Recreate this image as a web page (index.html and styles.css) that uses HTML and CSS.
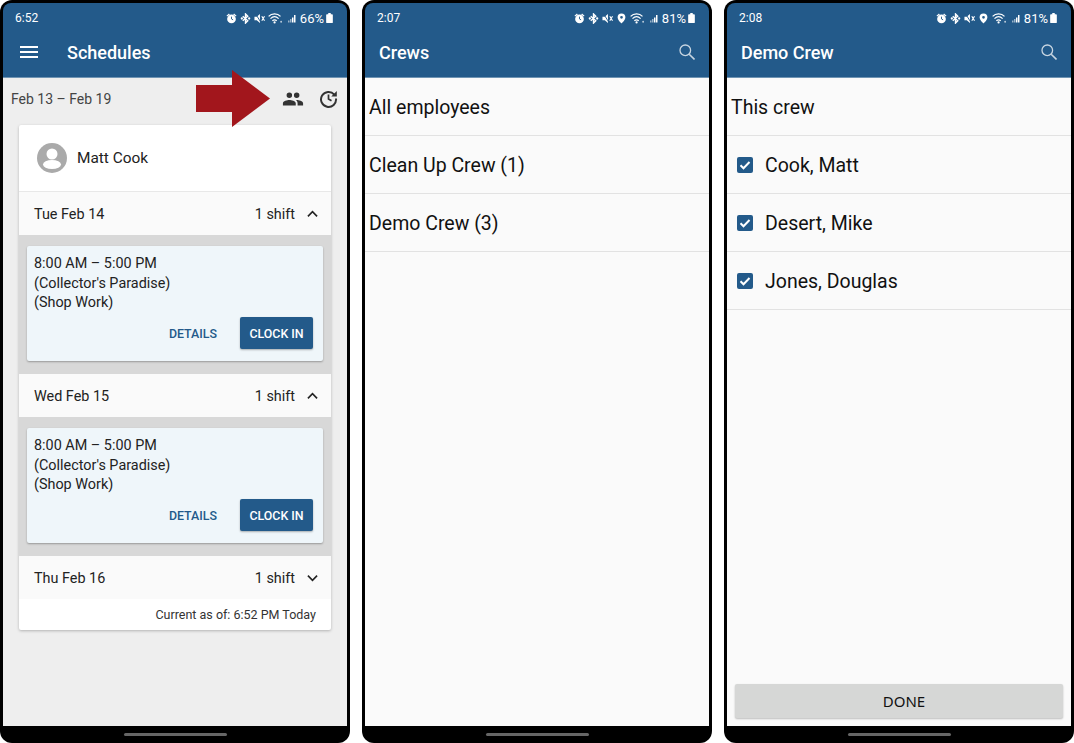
FILE: index.html
```html
<!DOCTYPE html>
<html lang="en">
<head>
  <meta charset="UTF-8" />
  <meta name="viewport" content="width=device-width, initial-scale=1.0"/>
  <title>Schedules and Crews</title>
  <link rel="stylesheet" href="styles.css">
</head>
<body>

<svg class="sprites" aria-hidden="true">
  <symbol id="i-alarm" viewBox="0 0 24 24"><path fill="currentColor" d="M23 6 17.500 1.300 15.800 3.300l5.500 4.600zM8.200 3.300 6.500 1.300 1 6l1.700 1.900zM12 3.500a9.500 9.500 0 1 0 0 19 9.500 9.500 0 0 0 0-19z"/><path fill="none" stroke="#235a8a" stroke-width="2" d="M12 8v5l3.500 2"/></symbol>
  <symbol id="i-bt" viewBox="0 0 24 24"><path fill="none" stroke="currentColor" stroke-width="3" d="M6 7l11 10-5 5V2l5 5L6 17"/><circle cx="4" cy="12" r="2.500" fill="currentColor"/><circle cx="20" cy="12" r="2.500" fill="currentColor"/></symbol>
  <symbol id="i-mute" viewBox="0 0 24 24"><path fill="currentColor" d="M1 8v8h5l7 6V2L6 8z"/><path fill="none" stroke="#235a8a" stroke-width="2" d="M3 1l13 21"/><path fill="none" stroke="currentColor" stroke-width="2.500" d="M17 7l6 10M23 7l-6 10"/></symbol>
  <symbol id="i-pin" viewBox="0 0 24 24"><path fill="currentColor" fill-rule="evenodd" d="M12 1a8.500 8.500 0 0 0-8.500 8.500C3.500 15.500 12 23 12 23s8.500-7.500 8.500-13.500A8.500 8.500 0 0 0 12 1zm0 5.500a3 3 0 1 1 0 6 3 3 0 0 1 0-6z"/></symbol>
  <symbol id="i-wifi" viewBox="0 0 24 18"><path fill="none" stroke="currentColor" stroke-width="2" d="M1 6.500C6 1 15 1 20 6.500M4 10c4-3.800 9-3.800 13 0M7 13.500c2-1.800 5-1.800 7 0"/><circle cx="10.500" cy="16" r="1.800" fill="currentColor"/><circle cx="21" cy="15" r="1.500" fill="currentColor" opacity=".7"/></symbol>
  <symbol id="i-signal" viewBox="0 0 20 20"><path fill="currentColor" opacity=".55" d="M2 14h3v4H2zM6 11h3v7H6z"/><path fill="currentColor" d="M10 8h3v10h-3zM14 3h3v15h-3z"/></symbol>
  <symbol id="i-battery" viewBox="0 0 8 12"><path fill="currentColor" d="M2.500 0h3v1.500H7a1 1 0 0 1 1 1V11a1 1 0 0 1-1 1H1a1 1 0 0 1-1-1V2.500a1 1 0 0 1 1-1h1.500z"/></symbol>
  <symbol id="i-search" viewBox="0 0 16 16"><circle cx="6.300" cy="6.300" r="5.300" fill="none" stroke="currentColor" stroke-width="1.300"/><path fill="none" stroke="currentColor" stroke-width="1.600" d="M10.200 10.200 15.500 15.500"/></symbol>
  <symbol id="i-check" viewBox="0 0 16 16"><rect width="16" height="16" rx="2" fill="#235a8a"/><path fill="none" stroke="#fff" stroke-width="2" d="M3.500 8.200l3 3 6-6.200"/></symbol>
</svg>

<div class="phone">
  <div class="screen">
    <header class="appbar">
      <div class="status">
        <span>6:52</span>
        <div class="status-icons">
          <svg class="si"><use href="#i-alarm"/></svg>
          <svg class="si"><use href="#i-bt"/></svg>
          <svg class="si"><use href="#i-mute"/></svg>
          <svg class="si-wifi"><use href="#i-wifi"/></svg>
          <svg class="si-signal"><use href="#i-signal"/></svg>
          <span class="pct">66%</span>
          <svg class="si-batt"><use href="#i-battery"/></svg>
        </div>
      </div>
      <div class="toolbar">
        <svg class="menu-icon" viewBox="0 0 18 12"><path fill="currentColor" d="M0 0h18v2H0zM0 5h18v2H0zM0 10h18v2H0z"/></svg>
        <div class="title title-menu">Schedules</div>
      </div>
    </header>

    <main class="schedule">
      <div class="date-bar">
        <span class="date-range">Feb 13 – Feb 19</span>
        <div class="date-actions">
          <svg class="group-icon" viewBox="0 0 24 24"><path fill="currentColor" d="M16 11a3 3 0 1 0 0-6 3 3 0 0 0 0 6zm-8 0a3 3 0 1 0 0-6 3 3 0 0 0 0 6zm0 2c-2.300 0-7 1.200-7 3.500V19h14v-2.500C15 14.200 10.300 13 8 13zm8 0h-1c1.200.8 2 2 2 3.500V19h6v-2.500c0-2.300-4.700-3.500-7-3.500z"/></svg>
          <svg class="history-icon" viewBox="0 0 24 24"><path fill="none" stroke="currentColor" stroke-width="2.500" d="M19.300 7A9.500 9.500 0 1 0 21.500 12"/><path fill="currentColor" d="M22.500 2.500V9.500h-7z"/><path fill="none" stroke="currentColor" stroke-width="2.200" d="M12 7v5.500l3.800 2.200"/></svg>
        </div>
      </div>

      <section class="card">
        <div class="person">
          <svg class="avatar" viewBox="0 0 30 30"><circle cx="15" cy="15" r="15" fill="#aaa"/><circle cx="15" cy="11" r="5.500" fill="#fff"/><ellipse cx="15" cy="21.500" rx="9" ry="4.500" fill="#fff"/></svg>
          <span>Matt Cook</span>
        </div>

        <div class="day">
          <span>Tue Feb 14</span>
          <span class="day-count">1 shift</span>
          <svg class="chev" viewBox="0 0 12 8"><path fill="none" stroke="currentColor" stroke-width="1.800" d="M1 6.500l5-5 5 5"/></svg>
        </div>
        <div class="shifts">
          <div class="shift">
            <div>8:00 AM – 5:00 PM</div>
            <div>(Collector's Paradise)</div>
            <div>(Shop Work)</div>
            <div class="shift-actions">
              <span class="details">DETAILS</span>
              <span class="clock-in">CLOCK IN</span>
            </div>
          </div>
        </div>

        <div class="day">
          <span>Wed Feb 15</span>
          <span class="day-count">1 shift</span>
          <svg class="chev" viewBox="0 0 12 8"><path fill="none" stroke="currentColor" stroke-width="1.800" d="M1 6.500l5-5 5 5"/></svg>
        </div>
        <div class="shifts">
          <div class="shift">
            <div>8:00 AM – 5:00 PM</div>
            <div>(Collector's Paradise)</div>
            <div>(Shop Work)</div>
            <div class="shift-actions">
              <span class="details">DETAILS</span>
              <span class="clock-in">CLOCK IN</span>
            </div>
          </div>
        </div>

        <div class="day">
          <span>Thu Feb 16</span>
          <span class="day-count">1 shift</span>
          <svg class="chev" viewBox="0 0 12 8"><path fill="none" stroke="currentColor" stroke-width="1.800" d="M1 1.500l5 5 5-5"/></svg>
        </div>
        <div class="current">Current as of: 6:52 PM Today</div>
      </section>
    </main>
  </div>
  <div class="home-bar"><span></span></div>
  <svg class="arrow" viewBox="0 0 74 57"><path fill="#a2161c" d="M0 15h36V0l38 28.500L36 57V42H0z"/></svg>
</div>

<div class="phone">
  <div class="screen">
    <header class="appbar">
      <div class="status">
        <span>2:07</span>
        <div class="status-icons">
          <svg class="si"><use href="#i-alarm"/></svg>
          <svg class="si"><use href="#i-bt"/></svg>
          <svg class="si"><use href="#i-mute"/></svg>
          <svg class="si"><use href="#i-pin"/></svg>
          <svg class="si-wifi"><use href="#i-wifi"/></svg>
          <svg class="si-signal"><use href="#i-signal"/></svg>
          <span class="pct">81%</span>
          <svg class="si-batt"><use href="#i-battery"/></svg>
        </div>
      </div>
      <div class="toolbar">
        <div class="title">Crews</div>
        <svg class="search-icon"><use href="#i-search"/></svg>
      </div>
    </header>
    <main class="list">
      <div class="row">All employees</div>
      <div class="row">Clean Up Crew (1)</div>
      <div class="row">Demo Crew (3)</div>
    </main>
  </div>
  <div class="home-bar"><span></span></div>
</div>

<div class="phone">
  <div class="screen">
    <header class="appbar">
      <div class="status">
        <span>2:08</span>
        <div class="status-icons">
          <svg class="si"><use href="#i-alarm"/></svg>
          <svg class="si"><use href="#i-bt"/></svg>
          <svg class="si"><use href="#i-mute"/></svg>
          <svg class="si"><use href="#i-pin"/></svg>
          <svg class="si-wifi"><use href="#i-wifi"/></svg>
          <svg class="si-signal"><use href="#i-signal"/></svg>
          <span class="pct">81%</span>
          <svg class="si-batt"><use href="#i-battery"/></svg>
        </div>
      </div>
      <div class="toolbar">
        <div class="title">Demo Crew</div>
        <svg class="search-icon"><use href="#i-search"/></svg>
      </div>
    </header>
    <main class="list">
      <div class="row">This crew</div>
      <div class="row row-check"><svg class="check"><use href="#i-check"/></svg>Cook, Matt</div>
      <div class="row row-check"><svg class="check"><use href="#i-check"/></svg>Desert, Mike</div>
      <div class="row row-check"><svg class="check"><use href="#i-check"/></svg>Jones, Douglas</div>
      <button class="done">DONE</button>
    </main>
  </div>
  <div class="home-bar"><span></span></div>
</div>

</body>
</html>
```

FILE: styles.css
```css
html, body {
  height: 100%;
}
body {
  margin: 0;
  background: white;
  font-family: Roboto, sans-serif;
  color: #222;
  display: flex;
  gap: 12px;
  overflow: hidden;
}
.sprites {
  display: none;
}
.phone {
  position: relative;
  width: 350px;
  height: 743px;
  box-sizing: border-box;
  padding: 3px 3px 0;
  background: black;
  border-radius: 12px;
  display: flex;
  flex-direction: column;
}
.screen {
  height: 723px;
  border-radius: 8px 8px 0 0;
  overflow: hidden;
  display: flex;
  flex-direction: column;
}
.home-bar {
  flex: 1;
  display: flex;
  align-items: center;
  justify-content: center;
}
.home-bar span {
  width: 103px;
  height: 3px;
  border-radius: 2px;
  background: #666;
}

.appbar {
  background: #235a8a;
  color: white;
  height: 74px;
  flex: none;
  border-bottom: 1px solid #6f94b3;
}
.status {
  height: 30px;
  padding: 0 14px 0 12px;
  display: flex;
  align-items: center;
  justify-content: space-between;
  font-size: 12px;
}
.status-icons {
  display: flex;
  align-items: center;
  gap: 3px;
}
.si {
  width: 11px;
  height: 11px;
}
.si-wifi {
  width: 15px;
  height: 12px;
}
.si-signal {
  width: 10px;
  height: 11px;
  margin-left: 1px;
}
.si-batt {
  width: 7px;
  height: 10px;
  margin-left: -1px;
}
.pct {
  font-size: 13px;
}
.toolbar {
  height: 44px;
  box-sizing: border-box;
  padding: 0 14px 6px;
  display: flex;
  align-items: center;
  justify-content: space-between;
}
.menu-icon {
  width: 18px;
  height: 12px;
  margin-left: 3px;
}
.title {
  font-size: 18px;
  font-weight: 500;
}
.title-menu {
  flex: 1;
  margin-left: 29px;
}
.search-icon {
  width: 16px;
  height: 16px;
  margin-bottom: 1px;
  opacity: .75;
}

.schedule {
  flex: 1;
  background: #eee;
}
.date-bar {
  height: 47px;
  box-sizing: border-box;
  padding: 0 9px 5px 8px;
  display: flex;
  align-items: center;
  justify-content: space-between;
}
.date-range {
  font-size: 14px;
  color: #444;
}
.date-actions {
  display: flex;
  align-items: center;
  gap: 15px;
}
.group-icon {
  width: 22px;
  height: 22px;
  color: #333;
}
.history-icon {
  width: 19px;
  height: 19px;
  margin-bottom: 2px;
  color: #333;
}
.arrow {
  position: absolute;
  left: 196px;
  top: 70px;
  width: 74px;
  height: 57px;
}

.card {
  margin: 0 16px;
  background: white;
  border-radius: 2px;
  box-shadow: 0 1px 3px rgba(0,0,0,0.25);
}
.person {
  height: 66px;
  padding: 0 18px;
  display: flex;
  align-items: center;
  gap: 10px;
  font-size: 15.4px;
  border-bottom: 1px solid #e8e8e8;
}
.avatar {
  width: 30px;
  height: 30px;
}
.day {
  height: 43px;
  box-sizing: border-box;
  padding: 1px 13px 0 15px;
  background: #fafafa;
  display: flex;
  align-items: center;
  font-size: 14.4px;
}
.day-count {
  margin-left: auto;
  margin-right: 12px;
}
.chev {
  width: 11px;
  height: 8px;
}
.shifts {
  height: 139px;
  box-sizing: border-box;
  padding: 11px 8px 0;
  background: #d8d8d8;
}
.shift {
  height: 115px;
  box-sizing: border-box;
  padding: 8px 10px 0 7px;
  background: #eff6fa;
  border-radius: 2px;
  box-shadow: 0 1px 2px rgba(0,0,0,0.3);
  font-size: 14.4px;
  line-height: 19.5px;
}
.shift-actions {
  margin-top: 4.5px;
  display: flex;
  align-items: center;
  justify-content: flex-end;
  gap: 23px;
  font-size: 12.4px;
  line-height: 16px;
  font-weight: 500;
}
.details {
  padding-top: 1px;
  color: #235a8a;
}
.clock-in {
  width: 73px;
  height: 32px;
  box-sizing: border-box;
  padding-top: 1px;
  background: #235a8a;
  color: white;
  border-radius: 2px;
  box-shadow: 0 1px 2px rgba(0,0,0,0.3);
  display: flex;
  align-items: center;
  justify-content: center;
}
.current {
  height: 31px;
  padding-right: 15px;
  box-sizing: border-box;
  display: flex;
  align-items: center;
  justify-content: flex-end;
  font-size: 12.5px;
  color: #333;
}

.list {
  flex: 1;
  background: #fafafa;
  display: flex;
  flex-direction: column;
  color: #111;
}
.row {
  height: 58px;
  flex: none;
  box-sizing: border-box;
  padding: 2px 0 0 4px;
  display: flex;
  align-items: center;
  font-size: 19.5px;
  border-bottom: 1px solid #e2e2e2;
}
.row-check {
  padding-left: 10px;
  gap: 12px;
}
.check {
  width: 16px;
  height: 16px;
  margin-top: -2px;
}
.done {
  margin: auto 8px 8px;
  height: 34px;
  padding-left: 16px;
  border: none;
  border-radius: 2px;
  background: #d6d7d6;
  box-shadow: 0 1px 2px rgba(0,0,0,0.25);
  color: #111;
  font-family: "Noto Sans", sans-serif;
  font-size: 15px;
}
```
